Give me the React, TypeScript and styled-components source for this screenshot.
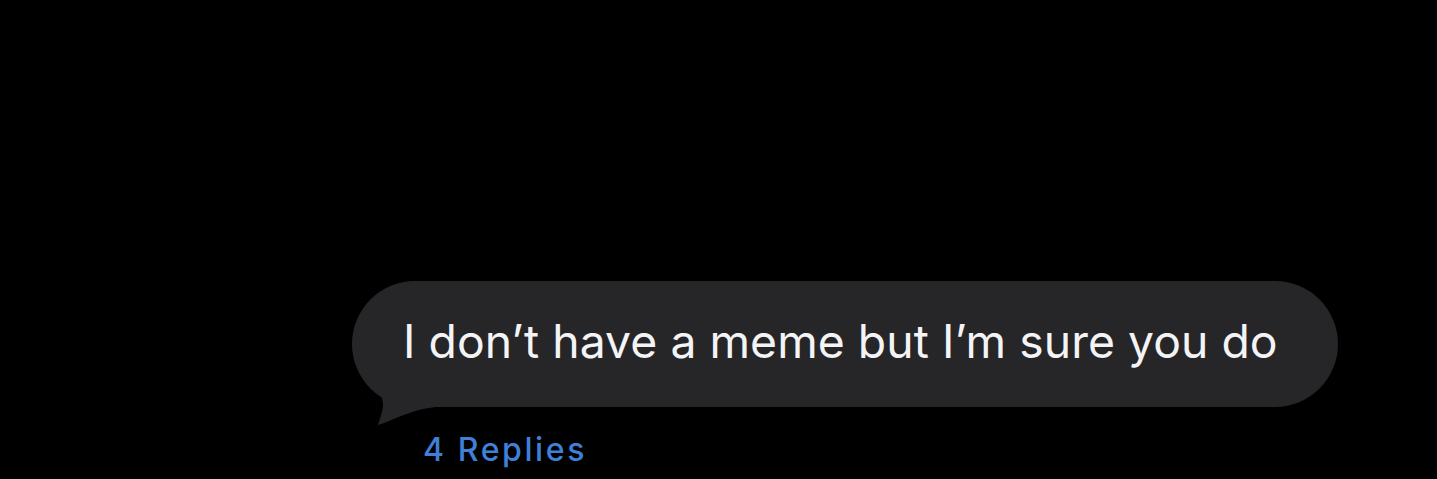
import React from "react";
import styled, { createGlobalStyle } from "styled-components";

const Global = createGlobalStyle`
  html, body { margin: 0; padding: 0; background: #000; }
  body { font-family: Inter, "Noto Sans", sans-serif; -webkit-font-smoothing: antialiased; }
`;

const Screen = styled.div`
  width: 1437px;
  height: 479px;
  background: #000;
  display: flex;
  flex-direction: column;
  align-items: flex-start;
  padding: 281px 0 0 352px;
  box-sizing: border-box;
  overflow: hidden;
`;

const Bubble = styled.div`
  position: relative;
  width: 986px;
  height: 126px;
  border-radius: 63px;
  background: #262629;
  display: flex;
  align-items: center;
  padding: 0 0 6px 51px;
  box-sizing: border-box;
`;

const Tail = styled.svg`
  position: absolute;
  left: 0;
  top: 0;
  overflow: visible;
`;

const MessageText = styled.span`
  position: relative;
  color: #f4f4f6;
  font-size: 46.3px;
  font-weight: 400;
  letter-spacing: 0.05px;
  white-space: nowrap;
`;

const Replies = styled.div`
  margin: 27px 0 0 71px;
  color: #3f80d8;
  font-size: 32px;
  font-weight: 500;
  letter-spacing: 2.6px;
  line-height: 1;
`;

export default function App() {
  return (
    <>
      <Global />
      <Screen>
        <Bubble>
          <Tail width="100" height="150" viewBox="0 0 100 150">
            <path
              d="M 4 80 L 6 89 C 18 102, 32 110, 31 125 C 30 133, 27 140, 26 144 C 40 140, 60 128, 84 126 L 84 80 Z"
              fill="#262629"
            />
          </Tail>
          <MessageText>I don’t have a meme but I’m sure you do</MessageText>
        </Bubble>
        <Replies>4 Replies</Replies>
      </Screen>
    </>
  );
}
